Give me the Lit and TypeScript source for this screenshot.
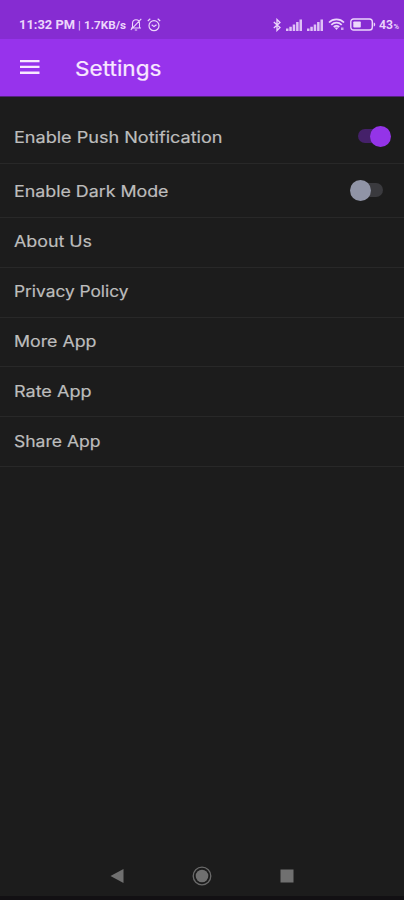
import { LitElement, html, css, svg } from "lit";
import { customElement, property } from "lit/decorators.js";

/** Single line of text fitted to a given width, for the wide geometric look. */
@customElement("fitted-label")
class FittedLabel extends LitElement {
  @property() text = "";
  @property({ type: Number }) width = 80;
  @property({ type: Number }) size = 16;
  static styles = css`
    :host { display: block; }
    svg { display: block; overflow: visible; }
    text { font-family: Inter, "Open Sans", sans-serif; fill: currentColor; stroke: currentColor; stroke-width: 0.2px; }
  `;
  render() {
    const h = Math.round(this.size * 1.25);
    return html`<svg width=${this.width} height=${h}>
      ${svg`<text x="0" y=${h - 4} font-size=${this.size} textLength=${this.width} lengthAdjust="spacingAndGlyphs">${this.text}</text>`}
    </svg>`;
  }
}

@customElement("toggle-switch")
class ToggleSwitch extends LitElement {
  @property({ type: Boolean, reflect: true }) on = false;
  static styles = css`
    :host { display: flex; align-items: center; width: 41px; height: 21px; }
    .track { width: 26px; height: 14px; border-radius: 7px; background: #3a3a3e; margin-left: 7px; }
    .thumb { width: 21px; height: 21px; border-radius: 50%; background: #9094a6; margin-left: -33px; }
    :host([on]) .track { background: #45216a; margin-left: 8px; }
    :host([on]) .thumb { background: #9434e8; margin-left: -14px; }
  `;
  render() {
    return html`<div class="track"></div><div class="thumb"></div>`;
  }
}

@customElement("status-bar")
class StatusBar extends LitElement {
  static styles = css`
    :host {
      display: flex; align-items: center; justify-content: space-between;
      height: 39px; box-sizing: border-box; padding: 10px 4px 0 18px;
      background: #862cd2; color: #ecd6fb;
      font-family: Roboto, sans-serif; overflow: hidden;
    }
    .side { display: flex; align-items: center; }
    svg { display: block; flex: none; }
    .time text { fill: currentColor; font-weight: 700; }
    .time .divider { font-weight: 400; }
    .bell { margin-left: 3px; }
    .alarm { margin-left: 5px; }
    .signal { margin-left: 5px; }
    .wifi { margin-left: 5px; }
    .battery { margin-left: 5px; }
    .level { margin-left: 3px; }
    .level text { fill: currentColor; font-weight: 600; }
  `;
  signal() {
    return html`<svg class="signal" width="16" height="12" viewBox="0 0 16 12" fill="currentColor" opacity=".88">
      <path d="M0 9.500h2.500V12H0zM3.300 7.800h2.500V12H3.300zM6.700 5.500h2.500V12H6.700zM10.100 3h2.500v9h-2.500zM13.500.5H16V12h-2.500z"/>
    </svg>`;
  }
  render() {
    return html`
      <div class="side">
        <svg class="time" width="109" height="14">
          <text x="1" y="11" font-size="12.5" textLength="56" lengthAdjust="spacingAndGlyphs">11:32 PM</text>
          <text class="divider" x="60" y="10.500" font-size="11">|</text>
          <text x="66" y="11" font-size="11.5" textLength="42" lengthAdjust="spacingAndGlyphs">1.7KB/s</text>
        </svg>
        <svg class="bell" width="12" height="13" viewBox="0 0 12 13" fill="none" stroke="currentColor" stroke-width="1.1">
          <path d="M1 10h10M2.500 10V5.500C2.500 3 4 1.800 6 1.800S9.500 3 9.500 5.500V10M4.800 12h2.400M.8 11.800 11.300.8"/>
        </svg>
        <svg class="alarm" width="14" height="14" viewBox="0 0 14 14" fill="none" stroke="currentColor" stroke-width="1.2">
          <circle cx="7" cy="7.700" r="5"/><path d="M.8 3 3.300.8M13.200 3 10.700.8M4.700 6.700 7 8.600l2.500-1.900"/>
        </svg>
      </div>
      <div class="side">
        <svg width="8" height="14" viewBox="0 0 8 14" fill="none" stroke="currentColor" stroke-width="1.300">
          <path d="M.8 4 7 9.500 4 12.500v-11L7 4.500.8 10"/>
        </svg>
        ${this.signal()}${this.signal()}
        <svg class="wifi" width="17" height="13" viewBox="0 0 17 13" fill="none" stroke="currentColor" stroke-width="1.700">
          <path d="M1 4.500C5 .3 12 .3 16 4.500M3.300 6.800c3-2.800 7.400-2.800 10.400 0M5.700 9c1.700-1.500 3.900-1.500 5.600 0"/>
          <path d="M6.500 9.500h4l-2 2.500z" fill="currentColor" stroke="none"/>
          <path d="M13 9.500h2.500v2.500H13z" fill="currentColor" stroke="none" opacity=".7"/>
        </svg>
        <svg class="battery" width="26" height="13" viewBox="0 0 26 13">
          <rect x=".8" y="1" width="21.500" height="11" rx="2.800" fill="none" stroke="currentColor" stroke-width="1.400"/>
          <rect x="3.300" y="3.500" width="7.500" height="6" rx=".8" fill="currentColor"/>
          <path d="M23.700 4.500c2 .2 2 3.800 0 4z" fill="currentColor"/>
        </svg>
        <svg class="level" width="21" height="14">
          <text x="0" y="11" font-size="12.500" textLength="14" lengthAdjust="spacingAndGlyphs">43</text>
          <text x="14.500" y="11" font-size="7" textLength="5.500" lengthAdjust="spacingAndGlyphs">%</text>
        </svg>
      </div>`;
  }
}

const toggles = [
  { text: "Enable Push Notification", width: 208.5, on: true },
  { text: "Enable Dark Mode", width: 154.5, on: false },
];
const links = [
  { text: "About Us", width: 78 },
  { text: "Privacy Policy", width: 114.5 },
  { text: "More App", width: 82.5 },
  { text: "Rate App", width: 77.5 },
  { text: "Share App", width: 86.5 },
];

@customElement("app-root")
class AppRoot extends LitElement {
  static styles = css`
    :host { display: flex; flex-direction: column; width: 404px; height: 900px; background: #1c1c1c; overflow: hidden; }
    header { display: flex; align-items: center; height: 57px; background: #9733ec; color: #f8e8ff; border-bottom: 1px solid #53237c; box-sizing: content-box; }
    .menu { display: block; margin: 0 35px 1px 20px; }
    .title { margin-bottom: 1px; }
    .list { flex: 1; padding-top: 12.6px; color: #bdbdbd; }
    .row { display: flex; align-items: center; justify-content: space-between; box-sizing: border-box; height: 49.8px; padding: 0 13px 0 14px; border-bottom: 1px solid #282828; }
    .row.tall { height: 54.2px; }
    .row.tall fitted-label { padding-top: 2px; }
    .row.link { padding-bottom: 2px; }
    nav { display: flex; align-items: center; height: 40px; padding: 0 110px; justify-content: space-between; border-bottom: 4px solid #121013; }
    nav svg { display: block; }
  `;
  render() {
    return html`
      <status-bar></status-bar>
      <header>
        <svg class="menu" width="20" height="14" viewBox="0 0 20 14" fill="currentColor"><path d="M0 0h19.500v2.300H0zM0 5.800h19.500v2.300H0zM0 11.600h19.500v2.300H0z"/></svg>
        <fitted-label class="title" text="Settings" width="86.5" size="20.5"></fitted-label>
      </header>
      <div class="list">
        ${toggles.map((t) => html`<div class="row tall">
          <fitted-label text=${t.text} width=${t.width} size="16"></fitted-label>
          <toggle-switch ?on=${t.on}></toggle-switch>
        </div>`)}
        ${links.map((l) => html`<div class="row link">
          <fitted-label text=${l.text} width=${l.width} size="16"></fitted-label>
        </div>`)}
      </div>
      <nav>
        <svg width="14" height="16" viewBox="0 0 14 16"><path d="M.5 8 13.500 1v14z" fill="#707070"/></svg>
        <svg width="20" height="20" viewBox="0 0 20 20"><circle cx="10" cy="10" r="8.800" fill="none" stroke="#6a6a6a" stroke-width="1.300"/><circle cx="10" cy="10" r="6.300" fill="#707070"/></svg>
        <svg width="14" height="14" viewBox="0 0 14 14"><rect x=".5" y=".5" width="13" height="13" fill="#707070"/></svg>
      </nav>`;
  }
}
